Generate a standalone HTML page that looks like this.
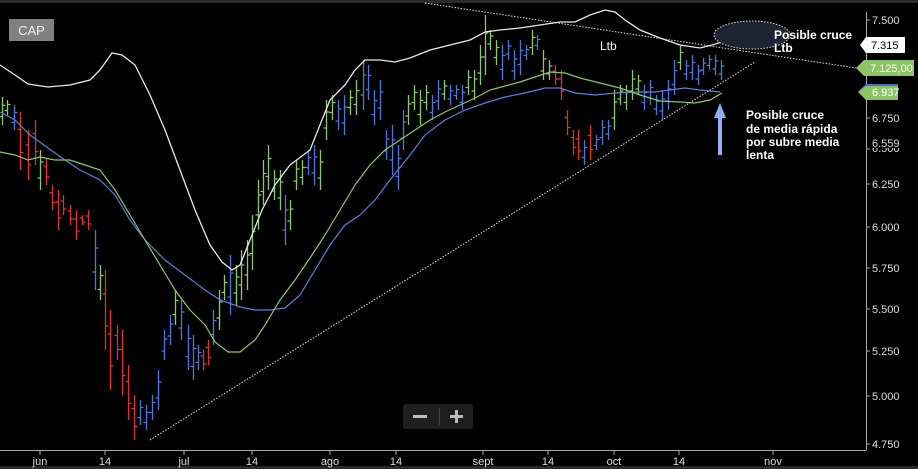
<!DOCTYPE html>
<html><head><meta charset="utf-8"><style>
html,body{margin:0;padding:0;background:#000;width:918px;height:469px;overflow:hidden}
svg{display:block}
text{font-family:"Liberation Sans",sans-serif}
</style></head><body>
<svg id="c" width="918" height="469" viewBox="0 0 918 469">
<rect width="918" height="469" fill="#000"/>
<rect x="0" y="0" width="918" height="3" fill="#2a2a2a"/>
<rect x="0" y="466" width="918" height="3" fill="#2a2a2a"/>
<rect x="9" y="19" width="45" height="22" fill="#808080"/>
<text x="31.5" y="35" fill="#f0f0f0" font-size="13" text-anchor="middle">CAP</text>
<g id="bars"></g>
<polyline fill="none" stroke="#e8e8e8" stroke-width="1.3" points="0,65 15,75 28,84 48,87 70,85 90,80 100,70 112,53 122,55 135,65 150,95 165,130 180,170 195,210 210,245 222,262 232,270 240,265 250,240 262,210 275,185 290,165 310,150 330,100 345,85 355,70 365,60 380,60 395,62 410,58 430,50 450,45 470,40 485,32 500,30 520,28 540,25 560,22 575,22 590,15 605,10 615,12 625,20 640,30 660,38 680,45 700,48 712,45 722,42"/>
<polyline fill="none" stroke="#5a7ee0" stroke-width="1.2" points="0,112 15,120 30,135 48,148 65,160 80,170 100,180 115,195 130,220 145,240 165,260 185,275 205,290 220,300 240,307 255,310 270,310 285,308 300,295 315,270 330,245 345,225 360,215 375,200 390,180 410,155 425,135 445,120 465,110 485,103 505,97 525,93 545,88 560,88 575,93 595,95 615,93 635,92 655,92 670,90 685,88 700,90 720,92"/>
<polyline fill="none" stroke="#8cc864" stroke-width="1.2" points="0,152 15,155 28,160 40,157 55,160 70,160 85,165 100,170 115,190 130,215 145,240 160,265 175,290 190,310 205,325 215,342 228,352 240,352 255,340 265,325 280,300 295,280 310,258 325,235 340,210 355,185 370,165 385,150 400,140 415,130 430,120 445,112 460,105 475,98 490,90 505,86 520,82 535,77 550,72 565,73 580,78 600,83 620,88 640,95 660,101 680,102 695,103 710,100 722,93"/>
<line x1="150" y1="440" x2="755" y2="62" stroke="#ddd" stroke-width="1" stroke-dasharray="1.5,1.5"/>
<line x1="425" y1="3" x2="856" y2="68" stroke="#ddd" stroke-width="1" stroke-dasharray="1.5,1.5"/>
<ellipse cx="752" cy="35" rx="38" ry="14" fill="#1c2333" stroke="#ddd" stroke-dasharray="1.5,1.5"/>
<text x="600" y="50" fill="#fff" font-size="12">Ltb</text>
<text x="774" y="39" fill="#fff" font-size="12" font-weight="bold">Posible cruce</text>
<text x="774" y="52" fill="#fff" font-size="12" font-weight="bold">Ltb</text>
<g fill="#fff" font-size="12" font-weight="bold">
<text x="746" y="119">Posible cruce</text>
<text x="746" y="133">de media rápida</text>
<text x="746" y="146">por subre media</text>
<text x="746" y="159">lenta</text>
</g>
<path d="M720,103 L726,118 L722,118 L722,155 L718,155 L718,118 L714,118 Z" fill="#8fb0f0"/>
<line x1="866.5" y1="12" x2="866.5" y2="450" stroke="#aaa"/>
<line x1="0" y1="450.5" x2="866" y2="450.5" stroke="#aaa"/>
<g fill="#ddd" font-size="11">
<text x="872" y="24">7.500</text>
<text x="872" y="122">6.750</text>
<text x="872" y="152">6.500</text>
<text x="872" y="188">6.250</text>
<text x="872" y="231">6.000</text>
<text x="872" y="272">5.750</text>
<text x="872" y="313">5.500</text>
<text x="872" y="355">5.250</text>
<text x="872" y="400">5.000</text>
<text x="872" y="448">4.750</text>
</g>
<rect x="868" y="140" width="36" height="8" fill="#000"/>
<text x="872" y="147" fill="#ddd" font-size="11">6.559</text>
<g stroke="#aaa"><line x1="866" y1="20" x2="870" y2="20"/><line x1="866" y1="118" x2="870" y2="118"/><line x1="866" y1="149" x2="870" y2="149"/><line x1="866" y1="184" x2="870" y2="184"/><line x1="866" y1="227" x2="870" y2="227"/><line x1="866" y1="268" x2="870" y2="268"/><line x1="866" y1="309" x2="870" y2="309"/><line x1="866" y1="351" x2="870" y2="351"/><line x1="866" y1="396" x2="870" y2="396"/><line x1="866" y1="444" x2="870" y2="444"/></g>
<path d="M860,45 L866,37 L905,37 L905,53 L866,53 Z" fill="#fff"/>
<text x="871" y="49" fill="#000" font-size="11">7.315</text>
<path d="M856,68 L864,60 L914,60 L914,76 L864,76 Z" fill="#8cc464"/>
<text x="870" y="72" fill="#fff" font-size="11">7.125,00</text>
<path d="M858,92 L866,84 L898,84 L898,100 L866,100 Z" fill="#8cc464"/>
<path d="M858,92 L866,84 L898,84 L898,86 L866,86 Z" fill="#4a6ec0"/>
<text x="872" y="96" fill="#fff" font-size="11">6.937</text>
<rect x="403" y="404" width="70" height="25" rx="3" fill="#1e1e1e"/>
<rect x="413" y="415" width="14" height="3" fill="#bbb"/>
<rect x="439" y="408" width="1" height="17" fill="#444"/>
<rect x="450" y="415" width="13" height="3" fill="#bbb"/><rect x="455" y="410" width="3" height="13" fill="#bbb"/>
<g stroke="#aaa"><line x1="40" y1="450" x2="40" y2="455"/><line x1="105" y1="450" x2="105" y2="455"/><line x1="184" y1="450" x2="184" y2="455"/><line x1="252" y1="450" x2="252" y2="455"/><line x1="330" y1="450" x2="330" y2="455"/><line x1="396" y1="450" x2="396" y2="455"/><line x1="483" y1="450" x2="483" y2="455"/><line x1="548" y1="450" x2="548" y2="455"/><line x1="614" y1="450" x2="614" y2="455"/><line x1="679" y1="450" x2="679" y2="455"/><line x1="773" y1="450" x2="773" y2="455"/></g>
<g fill="#ddd" font-size="11" text-anchor="middle">
<text x="40" y="465">jun</text><text x="105" y="465">14</text><text x="184" y="465">jul</text><text x="252" y="465">14</text><text x="330" y="465">ago</text><text x="396" y="465">14</text><text x="483" y="465">sept</text><text x="548" y="465">14</text><text x="614" y="465">oct</text><text x="679" y="465">14</text><text x="773" y="465">nov</text>
</g>
</svg>
<script>
var B=[[2,97,125,'g'],[7,100,115,'g'],[14,105,130,'b'],[20,112,170,'r'],[28,130,180,'r'],[35,120,165,'r'],[40,150,190,'g'],[46,158,185,'r'],[52,185,210,'r'],[58,190,230,'r'],[63,195,215,'r'],[70,205,225,'r'],[76,210,240,'r'],[82,215,225,'r'],[88,210,230,'r'],[95,230,290,'b'],[100,265,300,'g'],[105,270,350,'r'],[110,310,390,'r'],[117,325,360,'r'],[122,330,395,'r'],[128,365,420,'r'],[134,395,440,'r'],[140,400,425,'b'],[146,405,430,'b'],[152,395,420,'b'],[158,370,410,'b'],[164,330,360,'b'],[170,315,345,'b'],[175,290,325,'g'],[181,300,340,'b'],[188,325,370,'b'],[193,335,380,'b'],[198,345,370,'b'],[203,350,370,'r'],[208,340,365,'r'],[213,310,345,'b'],[219,290,330,'g'],[224,275,300,'g'],[230,255,315,'b'],[236,265,305,'g'],[241,250,300,'g'],[247,240,290,'g'],[252,215,270,'g'],[258,180,230,'g'],[263,160,205,'g'],[268,145,190,'g'],[274,170,200,'g'],[280,170,210,'g'],[285,195,245,'b'],[290,200,230,'g'],[296,160,190,'g'],[302,160,185,'g'],[308,150,175,'b'],[314,145,185,'b'],[320,150,190,'g'],[326,100,140,'g'],[332,95,120,'g'],[338,100,130,'b'],[344,95,135,'b'],[350,90,115,'g'],[356,80,115,'g'],[363,60,110,'b'],[368,65,100,'b'],[374,90,125,'b'],[380,80,120,'b'],[386,130,160,'b'],[392,125,175,'b'],[398,145,190,'b'],[403,110,150,'b'],[408,95,125,'g'],[414,85,110,'g'],[420,90,125,'g'],[426,85,110,'g'],[432,95,120,'b'],[438,80,110,'b'],[444,80,100,'g'],[450,85,105,'b'],[456,85,100,'b'],[462,85,110,'b'],[468,70,95,'g'],[474,70,100,'g'],[480,45,85,'g'],[485,15,75,'g'],[490,30,50,'g'],[496,40,65,'g'],[502,45,80,'b'],[508,40,60,'b'],[514,50,80,'b'],[520,40,75,'b'],[526,45,60,'b'],[532,30,55,'g'],[537,35,50,'b'],[543,50,80,'g'],[549,60,80,'g'],[555,65,85,'r'],[561,70,100,'r'],[567,110,135,'r'],[573,130,155,'r'],[578,130,160,'r'],[584,140,165,'b'],[590,125,160,'r'],[596,135,150,'b'],[602,120,145,'b'],[608,120,140,'b'],[614,90,130,'g'],[620,85,105,'g'],[626,85,110,'g'],[632,70,100,'g'],[638,75,95,'g'],[644,85,110,'b'],[650,80,105,'b'],[656,95,115,'b'],[662,90,120,'b'],[668,80,110,'b'],[674,60,95,'b'],[680,45,70,'g'],[686,60,80,'b'],[692,55,80,'b'],[698,65,85,'b'],[703,58,75,'b'],[709,55,70,'b'],[715,55,75,'b'],[721,60,80,'b']];
var C={r:'#e03030',g:'#8cc864',b:'#4a78d8'};var s='';
B.forEach(function(b,i){var x=b[0]+.5,h=b[1],l=b[2],d=l-h,o,c;
if(b[3]=='r'){o=h+d*.3;c=h+d*.7}else{o=h+d*.7;c=h+d*.3}
s+='<path d="M'+x+','+h+'V'+l+'M'+(x-3)+','+o+'h3M'+x+','+c+'h3" stroke="'+C[b[3]]+'" stroke-width="1.3" fill="none"/>';});
document.getElementById('bars').innerHTML=s;
</script>
</body></html>
